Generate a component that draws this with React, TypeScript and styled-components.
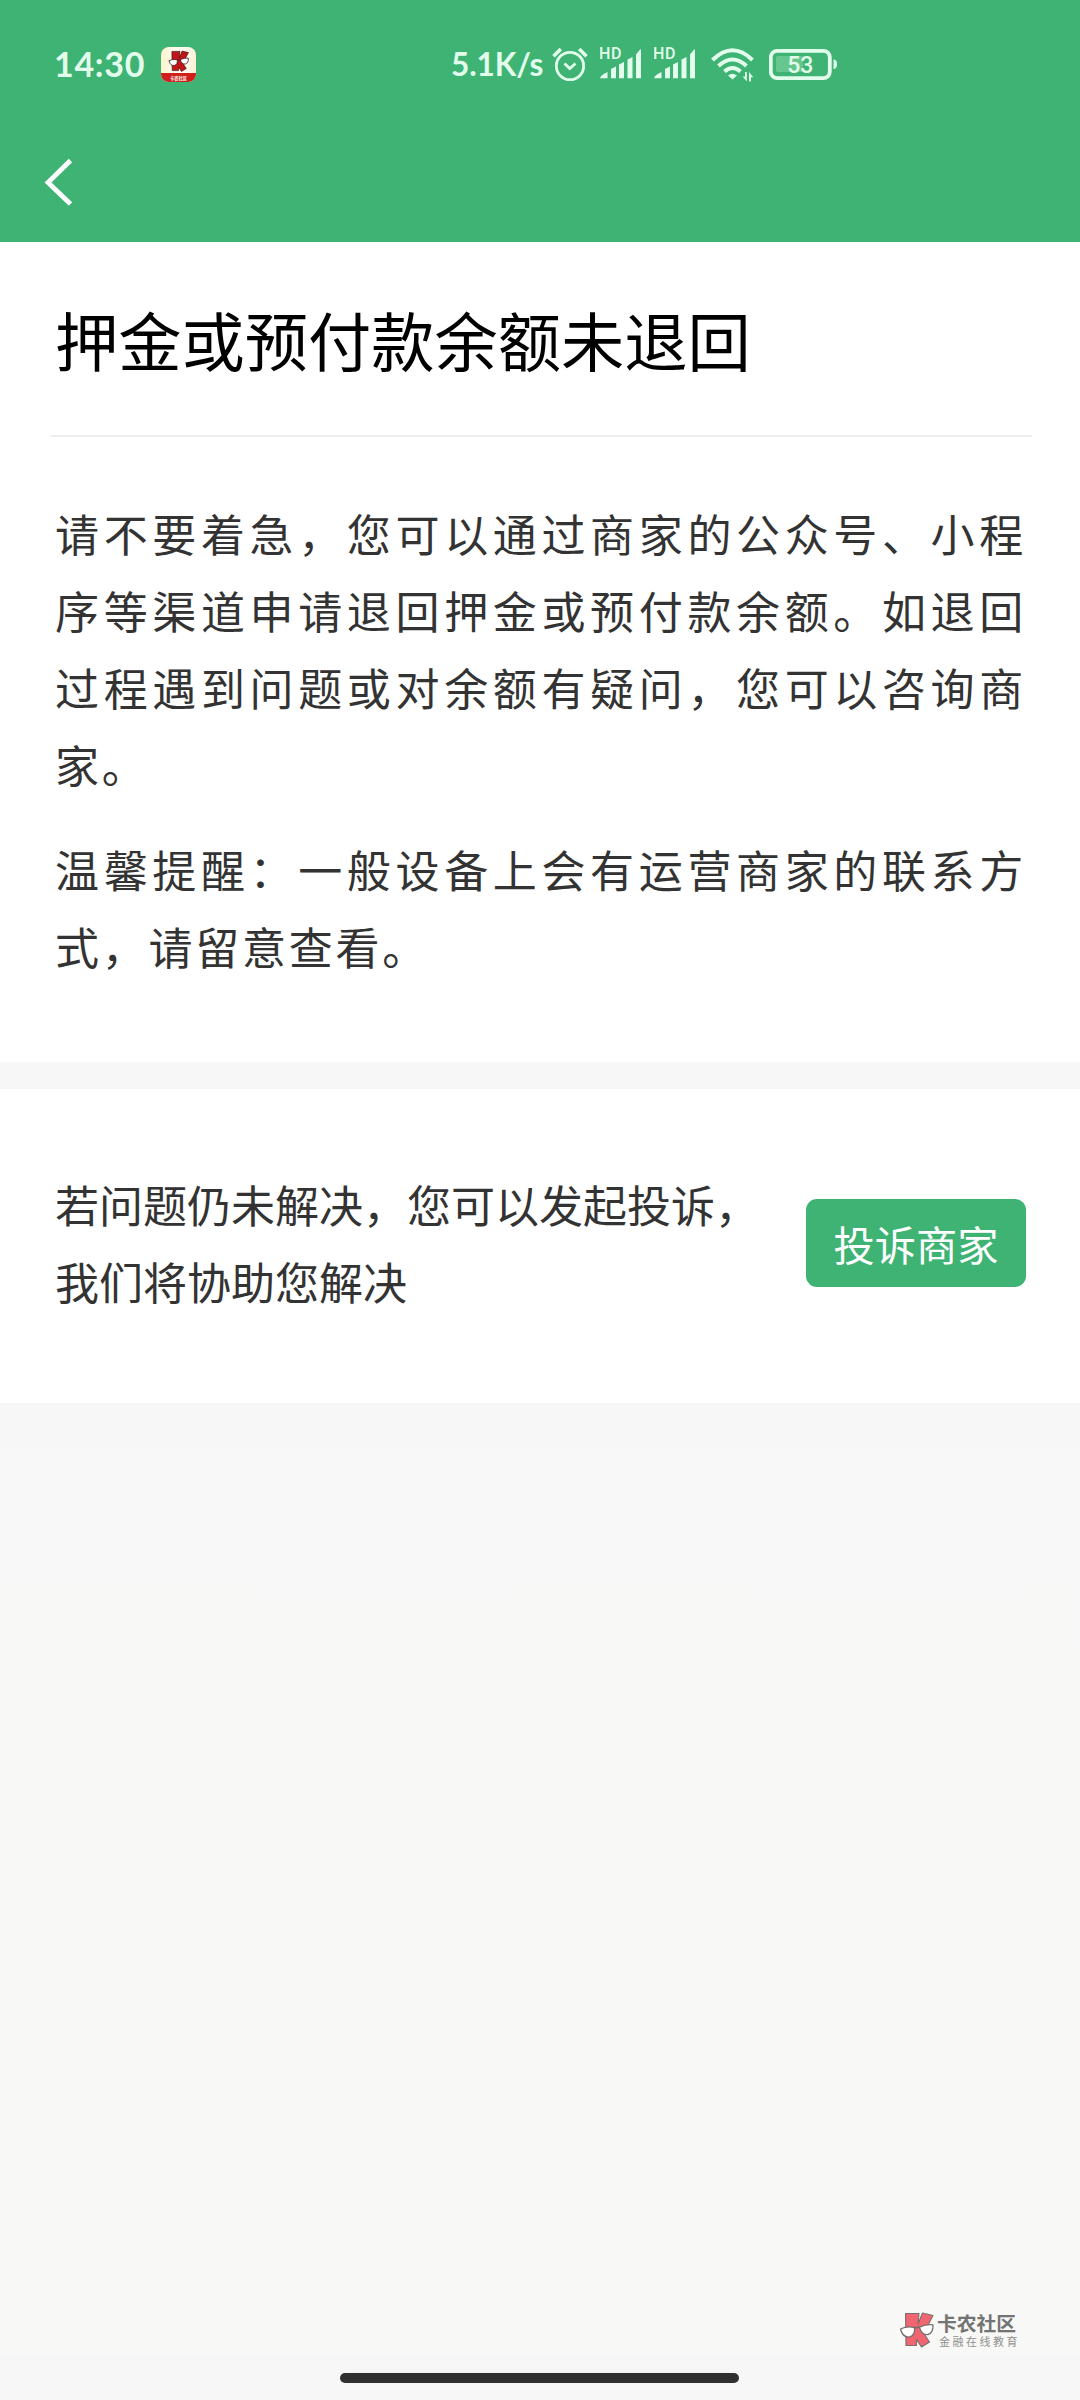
import React from 'react';
import styled, { createGlobalStyle } from 'styled-components';

const GREEN = '#3eb373';
const MINT = '#e2fdeb';
const CJK = '"Noto Sans CJK SC", "Noto Sans", sans-serif';

const GlobalStyle = createGlobalStyle`
  body {
    margin: 0;
    background: #f7f7f7;
    font-family: ${CJK};
  }
  * { box-sizing: border-box; }
`;

const Screen = styled.div`
  width: 1080px;
  height: 2400px;
  display: flex;
  flex-direction: column;
  background: linear-gradient(#f7f7f7 1403px, #f8f8f8 1500px, #f8f8f6 1900px, #f8f8f6 2354px, #f7f7f7 2356px);
  overflow: hidden;
`;

const Header = styled.header`
  height: 242px;
  background: ${GREEN};
  flex: none;
`;

const StatusBar = styled.div`
  height: 128px;
  padding: 0 243px 0 54px;
  display: flex;
  align-items: center;
  justify-content: space-between;
  color: ${MINT};
  font-family: Lato, sans-serif;
  font-weight: 700;
  line-height: 36px;
`;

const StatusGroup = styled.div`
  display: flex;
  align-items: center;
  svg { display: block; }
`;

const Clock = styled.span`
  width: 107px;
  font-size: 34px;
  letter-spacing: 0.7px;
`;

const Speed = styled.span`
  width: 101px;
  font-size: 31.5px;
  letter-spacing: -0.1px;
  white-space: nowrap;
`;

const IconSlot = styled.span<{ $width: number }>`
  width: ${(p) => p.$width}px;
  height: 40px;
  display: block;
`;

const NavBar = styled.nav`
  height: 114px;
  padding: 28px 0 0 40px;
`;

const BackButton = styled.button`
  display: block;
  padding: 0;
  border: 0;
  background: none;
  svg { display: block; }
`;

const Article = styled.section`
  height: 820px;
  flex: none;
  background: #fff;
  padding: 0 54px 0 55px;
`;

const TitleRow = styled.div`
  height: 195px;
  margin: 0 -6px 0 -4px;
  padding: 51px 4px 0;
  border-bottom: 2px solid #ededed;
`;

const Title = styled.h1`
  margin: 0;
  font-size: 63.25px;
  line-height: 92px;
  font-weight: 400;
  color: #000;
  white-space: nowrap;
`;

const Body = styled.div`
  padding-top: 58px;
`;

const Paragraph = styled.p`
  margin: 0 0 28px;
  font-size: 44px;
  line-height: 77px;
  letter-spacing: 2.75px;
  text-align: justify;
  color: #333;
`;

const Complaint = styled.section`
  height: 314px;
  flex: none;
  margin-top: 27px;
  padding: 0 54px 0 55px;
  background: #fff;
  display: flex;
  align-items: center;
  justify-content: space-between;
`;

const Hint = styled.p`
  width: 704px;
  margin: 0 0 6px;
  font-size: 44px;
  line-height: 77px;
  color: #333;
`;

const ComplaintButton = styled.button`
  width: 220px;
  height: 88px;
  margin: 0 0 6px;
  padding: 0;
  border: 0;
  border-radius: 11px;
  background: ${GREEN};
  color: #fff;
  font-family: ${CJK};
  font-size: 41.25px;
  line-height: 88px;
`;

const Footer = styled.footer`
  margin-top: auto;
  display: flex;
  flex-direction: column;
`;

const Brand = styled.div`
  display: flex;
  align-self: flex-end;
  gap: 3px;
  width: 181px;
  height: 61px;
  svg { display: block; flex: none; }
`;

const BrandText = styled.div`
  display: flex;
  flex-direction: column;
  white-space: nowrap;
`;

const BrandName = styled.span`
  font-size: 19.8px;
  line-height: 21px;
  font-weight: 700;
  color: #747474;
`;

const BrandTag = styled.span`
  padding: 1px 0 0 2px;
  font-size: 11px;
  line-height: 14px;
  letter-spacing: 2.5px;
  color: #909090;
`;

const HomeIndicator = styled.div`
  width: 399px;
  height: 10px;
  margin: 0 0 17px 340px;
  border-radius: 5px;
  background: #303030;
`;

const KMark = ({ fill, stroke }: { fill: string; stroke: string }) => (
  <g strokeLinejoin="round">
    <path d="M6.500 1.500H20L19 12L23.500 1L34 3.500L28 15L25.500 22.500L30.500 30L22.500 35L17.500 27.500V33.500H7Z" fill={fill} stroke={stroke} strokeWidth="1.100" />
    <path d="M1.500 17Q8 13.800 15.500 15.500Q16.500 23.500 10.500 25Q3.500 25.500 1.500 17Z" fill="#fff" stroke={stroke} strokeWidth="1.300" />
    <path d="M20.500 15.200Q27 12 34 12.800Q34.300 21 29 22.500Q22.500 23.500 20.500 15.200Z" fill="#fff" stroke={stroke} strokeWidth="1.300" />
    <path d="M15.500 16L20.500 15" stroke={stroke} strokeWidth="1.300" />
  </g>
);

const AppIcon = () => (
  <svg width="35" height="35" viewBox="0 0 35 35">
    <defs>
      <clipPath id="tile"><rect width="35" height="35" rx="8" /></clipPath>
      <linearGradient id="cream" x1="0" x2="1">
        <stop offset="0" stopColor="#fbf3cf" />
        <stop offset="0.5" stopColor="#fffef6" />
        <stop offset="1" stopColor="#fbf0d6" />
      </linearGradient>
    </defs>
    <g clipPath="url(#tile)">
      <rect width="35" height="35" fill="url(#cream)" />
      <rect y="26" width="35" height="9" fill="#cf1f1b" />
      <g transform="translate(7 3.500) scale(.6)"><KMark fill="#c3141a" stroke="#3a1413" /></g>
      <text x="17.500" y="32.500" textAnchor="middle" fontFamily="Noto Sans CJK SC" fontSize="4.200" fill="#fff">卡农社区</text>
    </g>
  </svg>
);

const AlarmIcon = () => (
  <svg width="36" height="40" viewBox="0 0 36 40" fill="none" stroke={MINT}>
    <circle cx="18" cy="22" r="13.700" strokeWidth="2.800" />
    <path d="M1.500 12.200L8.800 5M27.200 5L34.500 12.200" strokeWidth="3.600" />
    <path d="M12.500 19.500L17.800 24.500L23.500 19.500" strokeWidth="2.800" />
  </svg>
);

const SignalIcon = () => (
  <svg width="42" height="40" viewBox="0 0 42 40" fill={MINT}>
    <text x="-1" y="14.800" fontFamily="Roboto" fontSize="16" fontWeight="500" textLength="22.500">HD</text>
    <path d="M0 34.200Q1 31 7.500 28V34.200ZM11 25L16 22.500V34.200H11ZM19 20.500L24 18V34.200H19ZM27.500 15.500L32.500 13V34.200H27.500ZM36 10.500L40 5.500H41V34.200H36Z" />
  </svg>
);

const WifiIcon = () => (
  <svg width="44" height="40" viewBox="0 0 44 40">
    <g fill="none" stroke={MINT} strokeWidth="4">
      <path d="M1.500 16Q21.500 -3.500 41.500 16" />
      <path d="M7.500 22Q21.500 9 35.500 22" />
      <path d="M13.500 27.500Q21.500 20.500 29.500 27.500" />
    </g>
    <path d="M17 31.500Q21.500 28 26 31.500L21.500 35.500Z" fill={MINT} />
    <path d="M35.800 28V37.500L31.700 32.500H34V28ZM38 37.500V28L42.300 33.300H40V37.500Z" fill={MINT} />
  </svg>
);

const BatteryIcon = () => (
  <svg width="68" height="40" viewBox="0 0 68 40">
    <rect x="7" y="12" width="27" height="16" rx="2" fill="#66c78e" />
    <rect x="1.800" y="6.800" width="59" height="27.400" rx="6.500" fill="none" stroke={MINT} strokeWidth="3.800" />
    <path d="M64.500 15.500Q68 15.500 68 20Q68 25 64.500 25Z" fill={MINT} />
    <text x="31.300" y="28.700" textAnchor="middle" fontFamily="Roboto" fontSize="23" fontWeight="500" fill={MINT}>53</text>
  </svg>
);

export default function App() {
  return (
    <>
      <GlobalStyle />
      <Screen>
        <Header>
          <StatusBar>
            <StatusGroup>
              <Clock>14:30</Clock>
              <AppIcon />
            </StatusGroup>
            <StatusGroup>
              <Speed>5.1K/s</Speed>
              <IconSlot $width={48}><AlarmIcon /></IconSlot>
              <IconSlot $width={54}><SignalIcon /></IconSlot>
              <IconSlot $width={57}><SignalIcon /></IconSlot>
              <IconSlot $width={58}><WifiIcon /></IconSlot>
              <BatteryIcon />
            </StatusGroup>
          </StatusBar>
          <NavBar>
            <BackButton aria-label="返回">
              <svg width="40" height="54" viewBox="0 0 40 54">
                <path d="M30.500 4.500L8 26.500L30.500 48" fill="none" stroke="#fff" strokeWidth="4.800" />
              </svg>
            </BackButton>
          </NavBar>
        </Header>
        <Article>
          <TitleRow>
            <Title>押金或预付款余额未退回</Title>
          </TitleRow>
          <Body>
            <Paragraph>
              请不要着急，您可以通过商家的公众号、小程序等渠道申请退回押金或预付款余额。如退回过程遇到问题或对余额有疑问，您可以咨询商家。
            </Paragraph>
            <Paragraph>温馨提醒：一般设备上会有运营商家的联系方式，请留意查看。</Paragraph>
          </Body>
        </Article>
        <Complaint>
          <Hint>若问题仍未解决，您可以发起投诉，我们将协助您解决</Hint>
          <ComplaintButton>投诉商家</ComplaintButton>
        </Complaint>
        <Footer>
          <Brand>
            <svg width="35" height="36" viewBox="0 0 35 36"><KMark fill="#f0656f" stroke="#77706c" /></svg>
            <BrandText>
              <BrandName>卡农社区</BrandName>
              <BrandTag>金融在线教育</BrandTag>
            </BrandText>
          </Brand>
          <HomeIndicator />
        </Footer>
      </Screen>
    </>
  );
}
